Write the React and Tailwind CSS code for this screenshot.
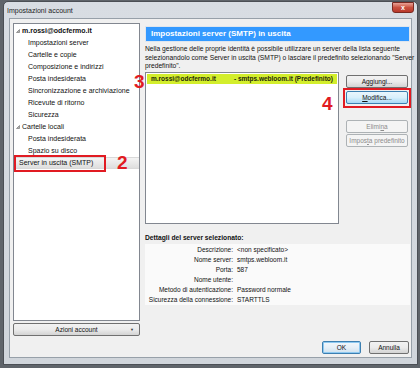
import React from "react";

const treeItems = [
  "Impostazioni server",
  "Cartelle e copie",
  "Composizione e indirizzi",
  "Posta indesiderata",
  "Sincronizzazione e archiviazione",
  "Ricevute di ritorno",
  "Sicurezza",
];

const details = [
  ["Descrizione:", "<non specificato>"],
  ["Nome server:", "smtps.webloom.it"],
  ["Porta:", "587"],
  ["Nome utente:", ""],
  ["Metodo di autenticazione:", "Password normale"],
  ["Sicurezza della connessione:", "STARTTLS"],
];

const Tri = () => (
  <svg width="4" height="4" viewBox="0 0 4 4" className="shrink-0">
    <path d="M3.5 0.5 L3.5 3.5 L0.5 3.5 Z" fill="#b0b0b0" stroke="#6a6a6a" strokeWidth="0.6" />
  </svg>
);

const btn =
  "h-[13px] flex items-center justify-center rounded-[2px] border border-[#707070] bg-gradient-to-b from-[#f2f2f2] via-[#ebebeb] to-[#d3d3d3] text-[6.5px] text-[#111]";

const btnOff =
  "h-[13px] flex items-center justify-center rounded-[2px] border border-[#adb2b5] bg-[#f4f4f4] text-[6.5px] text-[#8c8c8c]";

export default function App() {
  return (
    <div className="w-[420px] h-[368px] overflow-hidden bg-[#5f646a] pt-[1px] pl-[3px] font-['Liberation_Sans',Arial,sans-serif]">
      {/* window */}
      <div className="w-[415px] h-[364px] flex flex-col border border-[#4b4f55] rounded-t-[5px] bg-gradient-to-b from-[#d8dde3] to-[#d0d5db]">
        {/* title bar */}
        <div className="h-[16px] flex justify-between">
          <span className="pl-[3px] pt-[4px] text-[7px] text-[#1e1e1e]">Impostazioni account</span>
          <div className="mr-[3px] w-[22px] h-[11px] rounded-b-[3px] border border-[#7a2a22] bg-gradient-to-b from-[#e8a196] via-[#c9503f] to-[#b8382a] flex items-center justify-center">
            <span className="text-[7px] font-bold text-white leading-none">x</span>
          </div>
        </div>

        {/* client area */}
        <div className="flex-1 mx-[5px] mb-[6px] mt-[1px] border border-[#97a0a9] bg-[#f0f0f0] pl-[3px] pr-[1px] pt-[4px] pb-[3px] flex flex-col">
          <div className="flex gap-[5px] h-[313px]">
            {/* left column */}
            <div className="w-[127px] flex flex-col">
              <div className="h-[298px] bg-white border border-[#828790] pt-[1px] text-[7px] text-[#111]">
                <div className="h-[12px] flex items-center gap-[2px] pl-[2px]">
                  <Tri />
                  <span className="font-bold">m.rossi@odcfermo.it</span>
                </div>
                {treeItems.map((t) => (
                  <div key={t} className="h-[12px] flex items-center pl-[14px]">
                    {t}
                  </div>
                ))}
                <div className="h-[12px] flex items-center gap-[2px] pl-[2px]">
                  <Tri />
                  <span>Cartelle locali</span>
                </div>
                <div className="h-[12px] flex items-center pl-[14px]">Posta indesiderata</div>
                <div className="h-[12px] flex items-center pl-[14px]">Spazio su disco</div>
                <div className="relative h-[12px] flex items-center pl-[5px] bg-gradient-to-b from-[#f4f4f4] to-[#dedede] border-y border-[#d9d9d9]">
                  Server in uscita (SMTP)
                  <div className="absolute left-0 top-[-3px] w-[92px] h-[17px] border-2 border-[#e11b22]" />
                  <span className="absolute left-[103px] top-[-5px] text-[19px] leading-none font-bold text-[#e11b22]">2</span>
                </div>
              </div>
              <div className={btn + " mt-[2px] relative"}>
                <span>Azioni account</span>
                <span className="absolute right-[5px] top-[3px] text-[4px] text-[#333]">▼</span>
              </div>
            </div>

            {/* right column */}
            <div className="w-[265px] flex flex-col">
              <div className="mt-[3px] h-[16px] bg-[#3399ff] border border-[#dfe6ee] flex items-center pl-[5px]">
                <span className="text-[8px] font-bold text-white">Impostazioni server (SMTP) in uscita</span>
              </div>
              <div className="mt-[3px] h-[27px] text-[6.7px] leading-[8.5px] text-[#111]">
                <div className="whitespace-nowrap">Nella gestione delle proprie identità è possibile utilizzare un server della lista seguente</div>
                <div className="whitespace-nowrap">selezionandolo come Server in uscita (SMTP) o lasciare il predefinito selezionando "Server</div>
                <div className="whitespace-nowrap">predefinito".</div>
              </div>
              <div className="flex gap-[7px]">
                <div className="relative w-[194px] h-[152px] bg-white border border-[#828790] p-[1px]">
                  <div className="h-[10px] bg-[#d3ee2c] flex items-center text-[6.5px] font-bold text-[#22260a]">
                    <span className="w-[87px] pl-[4px]">m.rossi@odcfermo.it</span>
                    <span>- smtps.webloom.it (Predefinito)</span>
                  </div>
                  <span className="absolute left-[-12px] top-[-1px] text-[19px] leading-none font-bold text-[#e11b22]">3</span>
                  <span className="absolute left-[176px] top-[21px] text-[19px] leading-none font-bold text-[#e11b22]">4</span>
                </div>
                <div className="w-[62px] flex flex-col pt-[3px]">
                  <div className={btn}>Aggiungi...</div>
                  <div className="relative mt-[3px]">
                    <div className="h-[13px] flex items-center justify-center rounded-[2px] border border-[#3c7fb1] bg-gradient-to-b from-[#eaf6fd] via-[#d9f0fc] to-[#a7d9f5] text-[6.5px] text-[#111]">
                      <span><span className="underline">M</span>odifica...</span>
                    </div>
                    <div className="absolute left-[-3px] right-[-3px] top-[-3px] bottom-[-4px] border-2 border-[#e11b22]" />
                  </div>
                  <div className={btnOff + " mt-[16px]"}>
                    <span>Elimi<span className="underline">n</span>a</span>
                  </div>
                  <div className={btnOff + " mt-[1px]"}>
                    <span>Impos<span className="underline">t</span>a predefinito</span>
                  </div>
                </div>
              </div>
              <div className="mt-[9px] h-[9px] text-[6.7px] font-bold text-[#111] leading-[9px]">
                Dettagli del server selezionato:
              </div>
              <div className="mt-[2px] h-[61px] bg-[#fafafa] pt-[1px] grid grid-cols-[88px_1fr] gap-x-[4px] auto-rows-[10px] text-[6.5px] text-[#111]">
                {details.map(([k, v]) => (
                  <React.Fragment key={k}>
                    <span className="text-right leading-[10px] whitespace-nowrap">{k}</span>
                    <span className="leading-[10px] whitespace-nowrap">{v}</span>
                  </React.Fragment>
                ))}
              </div>
            </div>
          </div>

          {/* bottom buttons */}
          <div className="mt-[5px] flex justify-end gap-[8px] pr-[1px]">
            <div className="w-[39px] h-[13px] flex items-center justify-center rounded-[2px] border border-[#3c7fb1] bg-gradient-to-b from-[#f2f8fc] via-[#e5eff7] to-[#cfe1ee] text-[6.5px] text-[#111] shadow-[inset_0_0_0_1px_#8ec9f1]">
              OK
            </div>
            <div className={btn + " w-[40px]"}>Annulla</div>
          </div>
        </div>
      </div>
    </div>
  );
}
